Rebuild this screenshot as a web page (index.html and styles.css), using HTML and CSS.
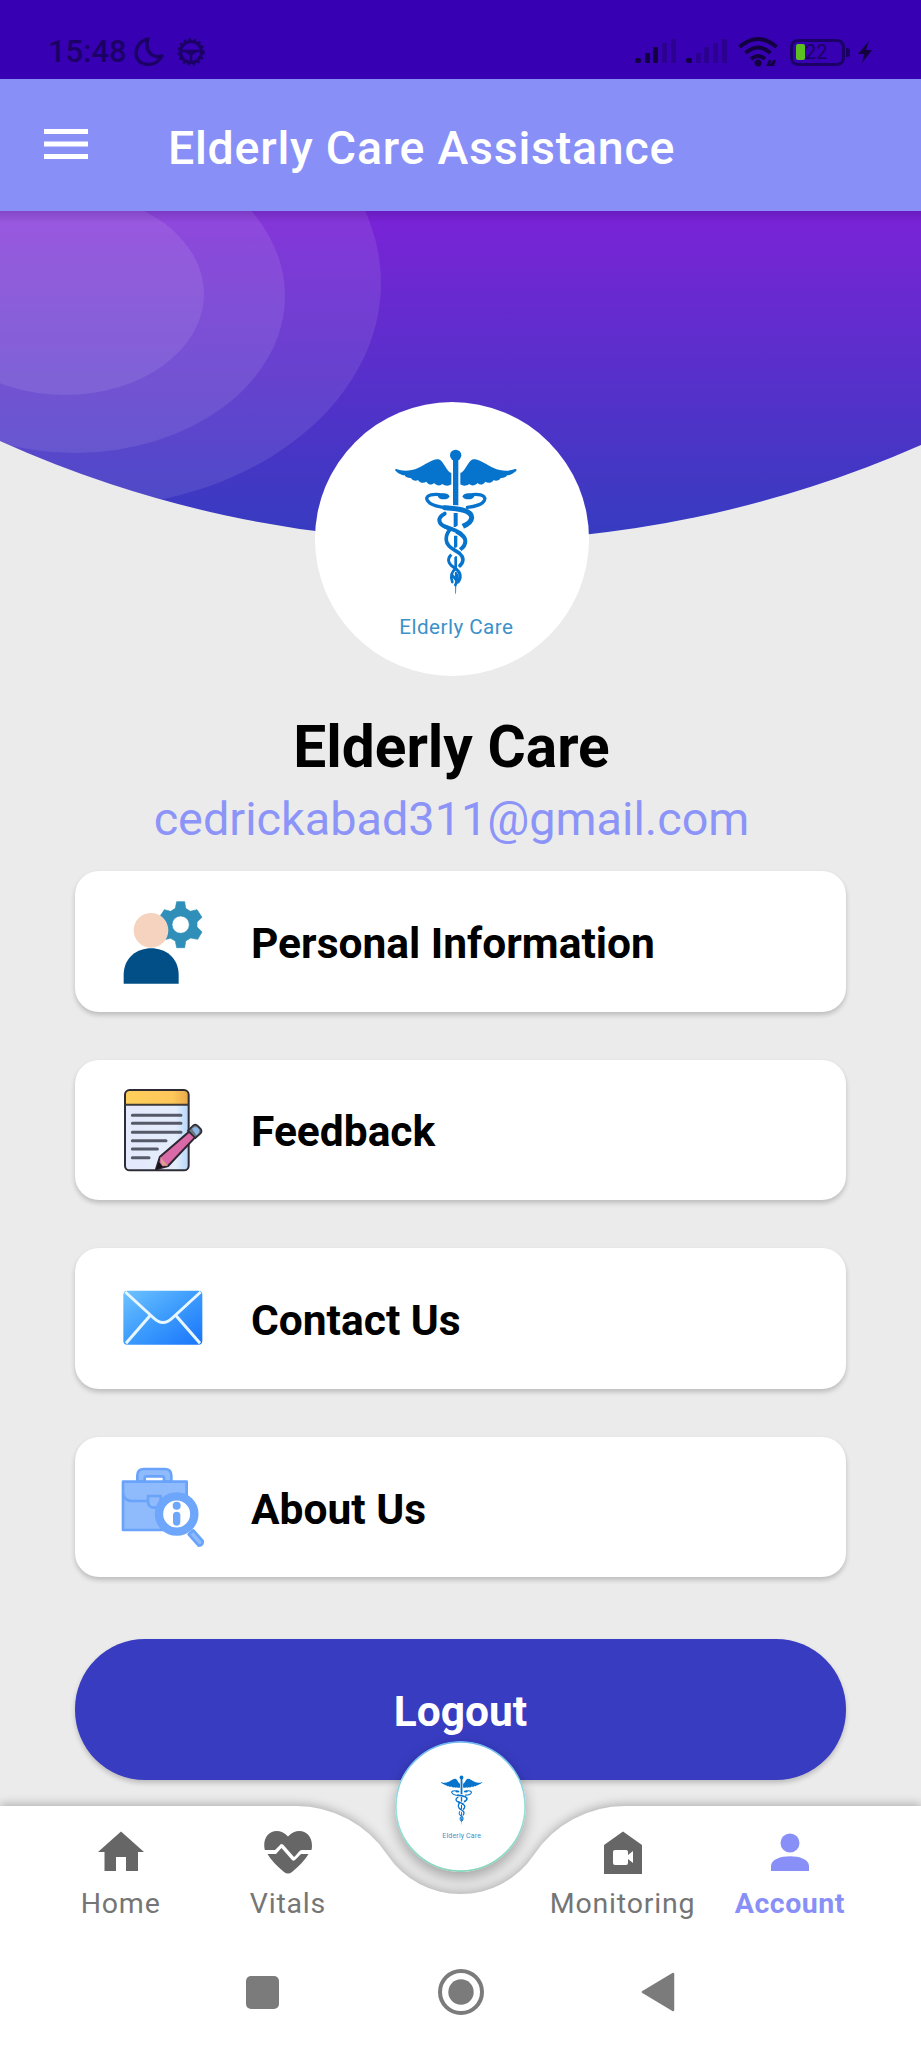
FILE: index.html
```html
<!DOCTYPE html>
<html lang="en">
<head>
<meta charset="utf-8">
<title>Elderly Care Assistance</title>
<link rel="stylesheet" href="styles.css">
</head>
<body>
<svg class="defs" width="0" height="0" aria-hidden="true">
  <defs>
    <symbol id="caduceus" viewBox="0 0 900 900" overflow="visible">
      <g fill="#0673cc">
        <circle cx="465" cy="195" r="17"/>
        <path d="M457 205H473V345H457Z"/>
        <path d="M459 368H471V410H459ZM460 436H470V472H460ZM461 498H469V530H461ZM463 545H468L466 610H464Z"/>
        <path id="wing" d="M452 248C438 246 430 212 414 207C398 203 376 222 352 233C332 242 306 244 288 236C282 235 282 242 288 244C296 252 308 255 312 255C314 262 326 264 331 263C335 271 346 273 352 269C356 278 370 280 377 274C384 284 394 285 400 278C408 287 420 287 425 281C434 288 446 287 452 282Z"/>
        <use href="#wing" transform="matrix(-1 0 0 1 931 0)"/>
      </g>
      <g fill="none" stroke="#fff" stroke-linecap="round">
        <path stroke="#0673cc" stroke-width="10" d="M505 315C530 308 556 314 552 328C548 340 525 350 500 351"/>
        <path stroke="#0673cc" stroke-width="12" d="M432 370C408 382 412 402 438 411C458 419 494 432 494 452C494 466 486 473 478 478"/>
        <path stroke="#0673cc" stroke-width="9" d="M458 488C438 502 440 518 458 530C476 541 484 556 474 573"/>
        <path stroke-width="18" d="M400 345C424 354 456 350 484 358"/>
        <path stroke="#0673cc" stroke-width="10" d="M428 315C400 308 374 314 379 328C386 346 424 352 440 352"/>
        <path stroke="#0673cc" stroke-width="15" d="M432 352C462 354 514 357 513 382C512 399 494 405 484 409"/>
        <path stroke-width="17" stroke-linecap="butt" d="M486 407L452 427M476 475L454 495"/>
        <path stroke="#0673cc" stroke-width="12" d="M434 409C456 417 470 422 480 429"/>
        <path stroke="#0673cc" stroke-width="11" d="M446 420C438 430 436 440 437 450C438 468 458 477 469 484C482 491 491 504 484 518L478 526"/>
        <path stroke="#0673cc" stroke-width="8" d="M466 534C452 544 448 556 455 575M466 550C476 560 468 574 464 584M456 556L472 576"/>
      </g>
      <g fill="#0673cc"><ellipse cx="429" cy="318" rx="17" ry="9"/><ellipse cx="503" cy="318" rx="17" ry="9"/></g>
      <text x="296" y="732" textLength="341" class="logo-text">Elderly Care</text>
    </symbol>
  </defs>
</svg>

<div class="screen">
  <header class="status">
    <div class="status-left">
      <span class="clock">15:48</span>
      <svg width="32" height="32" viewBox="0 0 32 32"><path d="M15 3C5 5 1 15 4 22C8 30 22 32 29 20C19 23 11 14 15 3Z" fill="none" stroke="#1b0066" stroke-width="3.4" stroke-linejoin="round"/></svg>
      <svg class="wheel" width="30" height="30" viewBox="0 0 30 30" fill="none" stroke="#1b0066"><circle cx="15" cy="15" r="12.500" stroke-width="2.500" stroke-dasharray="2.500 2.600"/><circle cx="15" cy="15" r="10.5" stroke-width="3"/><path d="M4 14H26M10 15Q15 15 15 20M20 15Q15 15 15 20V26" stroke-width="2.6"/></svg>
    </div>
    <div class="status-right">
      <svg width="42" height="28" viewBox="0 0 42 28"><g fill="#12003f"><rect x="0" y="20" width="6" height="5" rx="2"/><rect x="10" y="15" width="5" height="10" rx="1"/><rect x="18" y="9" width="5" height="16" rx="1"/></g><g fill="#2c0091"><rect x="27" y="5" width="5" height="20"/><rect x="36" y="1" width="5" height="24"/></g></svg>
      <svg class="sig" width="42" height="28" viewBox="0 0 42 28"><rect x="0" y="20" width="6" height="5" rx="2" fill="#12003f"/><g fill="#2c0091"><rect x="10" y="15" width="5" height="10"/><rect x="18" y="9" width="5" height="16"/><rect x="27" y="5" width="5" height="20"/><rect x="36" y="1" width="5" height="24"/></g></svg>
      <svg class="wifi" width="40" height="32" viewBox="0 0 40 32"><g fill="none" stroke="#12003f" stroke-width="4"><path d="M1.500 11Q20 -5 38.500 11"/><path d="M7.500 17Q20 6 32.500 17"/><path d="M13 23Q20 17 27 23"/></g><circle cx="20" cy="27" r="3.500" fill="#12003f"/><path d="M28 30L31 24H33L32 29L35 24H38L36 30Z" fill="#12003f"/></svg>
      <div class="battery"><i></i><span>22</span></div>
      <svg class="bolt" width="16" height="24" viewBox="0 0 16 24"><path d="M12 1L1 14H7L5 23L15 10H9Z" fill="#12003f"/></svg>
    </div>
  </header>

  <header class="appbar">
    <svg width="46" height="32" viewBox="0 0 46 32"><path d="M1 3.500H45M1 16H45M1 28.500H45" stroke="#fff" stroke-width="5"/></svg>
    <h1>Elderly Care Assistance</h1>
  </header>

  <main class="content">
    <svg class="hero" width="921" height="330" viewBox="0 211 921 330">
      <defs>
        <linearGradient id="sky" gradientUnits="userSpaceOnUse" x1="0" y1="211" x2="0" y2="540"><stop offset="0" stop-color="#7a22d8"/><stop offset=".15" stop-color="#7027d2"/><stop offset="1" stop-color="#353cc0"/></linearGradient>
        <linearGradient id="edge" x1="0" y1="0" x2="0" y2="1"><stop offset="0" stop-color="#20004a" stop-opacity=".18"/><stop offset="1" stop-color="#20004a" stop-opacity="0"/></linearGradient>
        <clipPath id="dome"><path d="M0 211H921V445A1130 1130 0 0 1 0 441Z"/></clipPath>
      </defs>
      <g clip-path="url(#dome)">
        <rect y="211" width="921" height="330" fill="url(#sky)"/>
        <g fill="#fff" fill-opacity=".09">
          <ellipse cx="80" cy="283" rx="301" ry="225"/>
          <ellipse cx="75" cy="296" rx="210" ry="157"/>
          <ellipse cx="65" cy="294" rx="139" ry="101"/>
        </g>
        <rect y="211" width="921" height="12" fill="url(#edge)"/>
      </g>
    </svg>

    <section class="profile">
      <svg class="avatar" viewBox="43 35 822 822"><circle cx="454" cy="446" r="411" fill="#fff"/><use href="#caduceus" width="900" height="900"/></svg>
      <h2>Elderly Care</h2>
      <p>cedrickabad311@gmail.com</p>
    </section>

    <nav class="menu">
      <a class="card">
        <svg viewBox="180 110 255 255"><path fill="#2f8fb8" fill-rule="evenodd" d="M350 118H374L377 138L391 147L411 142L426 165L411 179V194L426 209L413 231L392 227L377 236L374 256H350L346 236L332 228L312 232L300 209L314 194V179L300 162L313 142L332 147L346 138ZM362 161A26 26 0 1 0 362 213A26 26 0 1 0 362 161Z" stroke="#2f8fb8" stroke-width="2" stroke-linejoin="round"/><circle cx="273" cy="204" r="52" fill="#f5d3be"/><path d="M191 364V338C191 231 356 231 356 338V364Z" fill="#014f86"/></svg>
        <span>Personal Information</span>
      </a>
      <a class="card">
        <svg viewBox="180 677 255 255">
          <defs><linearGradient id="paper"><stop offset="0" stop-color="#e4e9fb"/><stop offset=".8" stop-color="#e4edfc"/><stop offset="1" stop-color="#b4d6fb"/></linearGradient><linearGradient id="strip"><stop offset="0" stop-color="#ffd05b"/><stop offset=".75" stop-color="#fdc75a"/><stop offset="1" stop-color="#e9a94a"/></linearGradient></defs>
          <rect x="195" y="686" width="191" height="241" rx="14" fill="url(#paper)"/>
          <path d="M195 728V700Q195 686 209 686H372Q386 686 386 700V728Z" fill="url(#strip)"/>
          <rect x="195" y="686" width="191" height="241" rx="14" fill="none" stroke="#2d2c34" stroke-width="6"/>
          <path d="M195 730H386" stroke="#3d3a38" stroke-width="6"/>
          <path d="M217 762H363M217 786H363M217 813H363M217 838H318M217 863H292M217 889H267" stroke="#565a68" stroke-width="9" stroke-linecap="round"/>
          <path d="M394 805L411 822L324 914L288 924L300 886Z" fill="#d969a7" stroke="#2d2530" stroke-width="6" stroke-linejoin="round"/>
          <path d="M300 886L324 914L306 912Z" fill="#d9a28f"/><path d="M296 900L309 917L288 925Z" fill="#171419"/>
          <path d="M384 808L400 792Q407 787 414 794L423 804Q427 811 421 817L406 830Z" fill="#6f7783" stroke="#2d2c34" stroke-width="5"/><path d="M396 802Q408 790 418 805Q418 816 409 822Z" fill="#8fb8e8"/>
        </svg>
        <span>Feedback</span>
      </a>
      <a class="card">
        <svg viewBox="180 137 255 255">
          <defs><linearGradient id="mail" x1="0" y1="0" x2="1" y2="1"><stop offset="0" stop-color="#6ec3ff"/><stop offset=".5" stop-color="#3c9bfd"/><stop offset="1" stop-color="#1a74fb"/></linearGradient></defs>
          <rect x="190" y="181" width="237" height="162" rx="12" fill="url(#mail)"/>
          <path d="M196 185L281 263Q309 290 337 263L422 185M198 339L271 255M420 339L347 255" fill="none" stroke="#e8f7ff" stroke-width="9"/>
        </svg>
        <span>Contact Us</span>
      </a>
      <a class="card">
        <svg viewBox="180 700 255 255">
          <g fill="#8fbafb" stroke="#69a3fa" stroke-width="8" stroke-linejoin="round">
            <path d="M232 750V732Q232 712 252 712H314Q334 712 334 732V750H312V740Q312 734 306 734H260Q254 734 254 740V750Z"/>
            <rect x="189" y="750" width="191" height="145"/>
            <path d="M189 785Q192 807 216 808H264M264 793H302V810Q300 828 283 828Q266 828 264 812Z"/>
            <path d="M386 908L400 896L428 928Q430 942 416 942Z"/>
          </g>
          <circle cx="350" cy="847" r="53" fill="#fff" stroke="#6da6fa" stroke-width="25"/>
          <circle cx="350" cy="822" r="12" fill="#6da6fa"/><path d="M350 851V871" stroke="#6da6fa" stroke-width="22" stroke-linecap="round"/>
        </svg>
        <span>About Us</span>
      </a>
    </nav>
    <button class="logout">Logout</button>
  </main>

  <footer class="bottom">
    <svg class="bar" width="921" height="262" viewBox="0 1786 921 262"><path d="M0 1806H296A110 110 0 0 1 387.400 1854.900A88 88 0 0 0 533.800 1854.900A110 110 0 0 1 625.200 1806H921V2048H0Z" fill="#fff"/></svg>
    <svg class="fab" viewBox="-122.500 -127.600 1157 1157"><defs><linearGradient id="ring" x1="0" y1="0" x2="0" y2="1"><stop offset="0" stop-color="#70b6f0"/><stop offset=".5" stop-color="#96e0dc"/><stop offset="1" stop-color="#84d6bb"/></linearGradient></defs><circle cx="456" cy="451" r="571" fill="#fff" stroke="url(#ring)" stroke-width="16"/><use href="#caduceus" width="900" height="900"/></svg>
    <nav class="tabs">
      <a><svg viewBox="0 0 48 48"><path d="M24 3.500L47 24H41V43H29V29H19V43H7.500V24H1Z"/></svg>Home</a>
      <a><svg viewBox="0 0 48 48"><path d="M.8 22C-3 5 13-3 24 8.500C35-3 51 5 47.500 22H38C35 22 33 27 30 29L19 16.500L17 16L11 22Z"/><path d="M3.500 26H12L17.500 20L28 32Q30 34 32 31L37 26H44.500Q40 34 28 44Q24 47 20 44Q8 34 3.500 26Z"/></svg>Vitals</a>
      <a class="gap"></a>
      <a><svg viewBox="0 0 48 48"><path fill-rule="evenodd" d="M24 3.500L43 17V46H5V17ZM16 22Q14 22 14 24V35Q14 37 16 37H27Q29 37 29 35V31L34 35V23L29 27V24Q29 22 27 22Z"/></svg>Monitoring</a>
      <a class="active"><svg viewBox="0 0 48 48"><circle cx="24" cy="15" r="9.500"/><path d="M5 43V38C5 25 43 25 43 38V43Z"/></svg>Account</a>
    </nav>
    <div class="system">
      <svg width="35" height="35" viewBox="0 0 35 35"><rect x="1" y="1" width="33" height="33" rx="5" fill="#7b7b7b"/></svg>
      <svg width="48" height="48" viewBox="0 0 48 48"><circle cx="24" cy="24" r="21" fill="none" stroke="#7b7b7b" stroke-width="4"/><circle cx="24" cy="24" r="12.700" fill="#7b7b7b"/></svg>
      <svg width="35" height="42" viewBox="0 0 35 42"><path d="M2 21L32 3V39Z" fill="#7b7b7b" stroke="#7b7b7b" stroke-width="2.500" stroke-linejoin="round"/></svg>
    </div>
  </footer>
</div>
</body>
</html>
```

FILE: styles.css
```css
* { box-sizing: border-box; }
body { margin: 0; font-family: Roboto, "Liberation Sans", sans-serif; }
h1, h2, p { margin: 0; }
svg { display: block; flex: none; }
.defs { position: absolute; }
.screen { position: relative; width: 921px; height: 2048px; overflow: hidden; background: #ebebeb; }

.status { height: 79px; background: #3700b3; display: flex; justify-content: space-between; padding: 36px 48px 0 48px; color: #1b0066; }
.status-left, .status-right { display: flex; height: 32px; align-items: center; }
.clock { font-size: 31px; font-weight: 500; line-height: 36px; margin-right: 6px; }
.wheel { margin-left: 11px; }
.sig { margin-left: 9px; }
.wifi { margin-left: 10px; }
.battery { position: relative; width: 55px; height: 27px; margin-left: 12px; border: 3.500px solid #1b0066; border-radius: 8px; display: flex; align-items: center; font-size: 20px; color: #1b0066; }
.battery::after { content: ""; position: absolute; right: -8px; top: 6px; width: 4px; height: 9px; border-radius: 0 3px 3px 0; background: #1b0066; }
.battery i { width: 9px; height: 16px; margin-left: 3px; background: #5cc021; border-radius: 2px; }
.bolt { margin-left: 12px; }

.appbar { height: 132px; background: #8890f8; display: flex; align-items: center; padding-left: 43px; color: #fff; }
.appbar svg { margin-top: -2px; }
.appbar h1 { margin: 5px 0 0 79px; font-size: 46.500px; font-weight: 500; letter-spacing: .75px; white-space: nowrap; }

.content { position: relative; height: 1837px; }
.hero { position: absolute; top: 0; left: 0; }
.profile { position: relative; display: flex; flex-direction: column; align-items: center; padding-top: 191px; width: 903px; }
.avatar { width: 274px; height: 274px; }
.logo-text { font-size: 62px; font-family: Roboto, sans-serif; fill: #3d91c9; }
.profile h2 { margin-top: 37px; font-size: 58.600px; line-height: 68px; font-weight: 700; color: #000; }
.profile p { font-size: 46.800px; line-height: 56px; margin-top: 10px; color: #8c94f8; white-space: nowrap; }

.menu { position: relative; margin: 24px 75px 0; display: flex; flex-direction: column; gap: 48px; }
.card { height: 140.600px; display: flex; align-items: center; padding-left: 45px; background: #fff; border-radius: 24px; box-shadow: 0 3px 5px rgba(0,0,0,.2); font-size: 42.500px; font-weight: 700; color: #000; }
.card svg { width: 85px; height: 85px; }
.card span { margin: 4px 0 0 46px; white-space: nowrap; }
.logout { display: block; width: 771px; height: 141px; margin: 62px 75px 0; padding: 4px 0 0; border: 0; border-radius: 70px; background: #383cc1; color: #fff; font: 700 42.500px Roboto, sans-serif; box-shadow: 0 3px 5px rgba(0,0,0,.2); }

.bottom { position: absolute; left: 0; bottom: 0; width: 921px; height: 262px; }
.bar { position: absolute; top: 0; left: 0; overflow: visible; filter: drop-shadow(0 -2px 5px rgba(0,0,0,.25)); }
.fab { position: absolute; left: 395px; top: -45px; width: 131px; height: 131px; border-radius: 50%; box-shadow: 0 6px 14px rgba(0,0,0,.3); }
.tabs { position: relative; display: grid; grid-template-columns: repeat(5, 167.300px); padding: 42px 0 0 37px; }
.tabs a { display: flex; flex-direction: column; align-items: center; font-size: 28.500px; line-height: 34px; letter-spacing: .8px; color: #757575; }
.tabs svg { width: 48px; height: 48px; margin-bottom: 11px; fill: #666; }
.tabs .active { color: #8890f8; font-weight: 700; letter-spacing: .5px; }
.tabs .active svg { fill: #8890f8; }
.system { position: relative; display: grid; grid-template-columns: repeat(3, 198px); justify-content: center; place-items: center; height: 48px; margin-top: 47px; }
```
